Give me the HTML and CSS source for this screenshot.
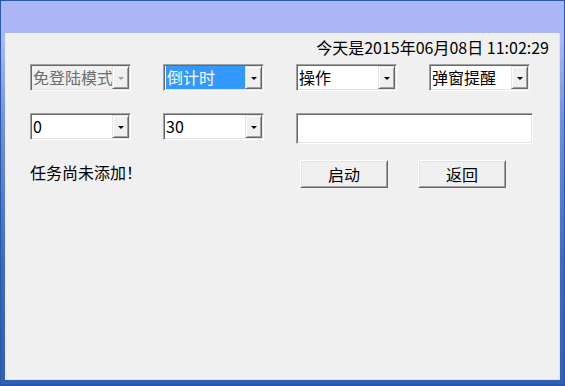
FILE: index.html
```html
<!DOCTYPE html>
<html lang="zh-CN">
<head>
    <meta charset="UTF-8">
    <title>定时任务</title>
    <link rel="stylesheet" href="styles.css">
</head>
<body>
    <div class="window">
        <div class="titlebar"></div>
        <div class="client">
            <div class="clock">今天是2015年06月08日 11:02:29</div>

            <div class="row row-top">
                <div class="combo disabled">
                    <span class="value">免登陆模式</span>
                    <span class="arrow"><i></i></span>
                </div>
                <div class="combo">
                    <span class="value"><span class="selected">倒计时</span></span>
                    <span class="arrow"><i></i></span>
                </div>
                <div class="combo">
                    <span class="value">操作</span>
                    <span class="arrow"><i></i></span>
                </div>
                <div class="combo">
                    <span class="value">弹窗提醒</span>
                    <span class="arrow"><i></i></span>
                </div>
            </div>

            <div class="row row-mid">
                <div class="combo">
                    <span class="value">0</span>
                    <span class="arrow"><i></i></span>
                </div>
                <div class="combo">
                    <span class="value">30</span>
                    <span class="arrow"><i></i></span>
                </div>
                <div class="textbox"></div>
            </div>

            <div class="row row-bottom">
                <div class="status">任务尚未添加！</div>
                <div class="btn">启动</div>
                <div class="btn">返回</div>
            </div>
        </div>
    </div>
</body>
</html>
```

FILE: styles.css
```css
* {
    box-sizing: border-box;
}

body {
    margin: 0;
    font-family: "Noto Sans CJK SC", "Noto Sans", sans-serif;
    font-size: 16px;
    color: #000;
    background: #3463b6;
}

.window {
    width: 565px;
    height: 386px;
    display: flex;
    flex-direction: column;
    border: 1px solid #2a58a8;
    border-bottom-width: 2px;
    background: linear-gradient(to bottom, #abb6f4 0, #abb6f4 40px, #6f92dc 120px, #3c6cc2 260px, #3060b4 100%);
}

.titlebar {
    height: 32px;
    flex-shrink: 0;
}

.client {
    flex: 1;
    margin: 0 4px 4px 4px;
    background: #f0f0f0;
    border-right: 1px solid #dbe3f5;
    border-bottom: 1px solid #dbe3f5;
    padding: 0 0 0 25px;
}

.clock {
    padding-top: 4px;
    padding-right: 10px;
    line-height: 20px;
    text-align: right;
}

.row {
    display: flex;
    align-items: flex-start;
}

.row-top {
    margin-top: 7px;
    gap: 32px;
}

.row-mid {
    margin-top: 22px;
    gap: 32px;
}

.row-bottom {
    margin-top: 16px;
}

/* sunken combo box */
.combo {
    width: 101px;
    height: 27px;
    display: flex;
    background: #fff;
    border-top: 1px solid #a0a0a0;
    border-left: 1px solid #a0a0a0;
    border-right: 1px solid #fff;
    border-bottom: 1px solid #fff;
    box-shadow: inset 1px 1px 0 #696969, inset -1px -1px 0 #e3e3e3;
}

.combo .value {
    flex: 1;
    padding: 1px 0 1px 2px;
    line-height: 23px;
    white-space: nowrap;
    overflow: hidden;
}

.combo .selected {
    display: block;
    width: 81px;
    height: 23px;
    background: #3399ff;
    color: #fff;
    padding-left: 1px;
}

.combo .arrow {
    width: 17px;
    margin: 1px 1px 1px 0;
    background: #f0f0f0;
    border-top: 1px solid #e3e3e3;
    border-left: 1px solid #e3e3e3;
    border-right: 1px solid #696969;
    border-bottom: 1px solid #696969;
    box-shadow: inset 1px 1px 0 #fff, inset -1px -1px 0 #a0a0a0;
    display: flex;
    align-items: center;
    justify-content: center;
}

.combo .arrow i {
    width: 0;
    height: 0;
    border-left: 3px solid transparent;
    border-right: 3px solid transparent;
    border-top: 3px solid #000;
    margin-top: 1px;
}

.combo.disabled {
    background: #f0f0f0;
    color: #6d6d6d;
}

.combo.disabled .arrow i {
    border-top-color: #a0a0a0;
}

.textbox {
    width: 237px;
    height: 31px;
    background: #fff;
    border-top: 1px solid #a0a0a0;
    border-left: 1px solid #a0a0a0;
    border-right: 1px solid #fff;
    border-bottom: 1px solid #fff;
    box-shadow: inset 1px 1px 0 #696969, inset -1px -1px 0 #e3e3e3;
}

.status {
    width: 270px;
    margin-top: 2px;
    line-height: 20px;
}

.btn {
    width: 88px;
    height: 28px;
    margin-right: 30px;
    line-height: 26px;
    text-align: center;
    background: #f0f0f0;
    border-top: 1px solid #fff;
    border-left: 1px solid #fff;
    border-right: 1px solid #696969;
    border-bottom: 1px solid #696969;
    box-shadow: inset 1px 1px 0 #e3e3e3, inset -1px -1px 0 #a0a0a0;
}
```
